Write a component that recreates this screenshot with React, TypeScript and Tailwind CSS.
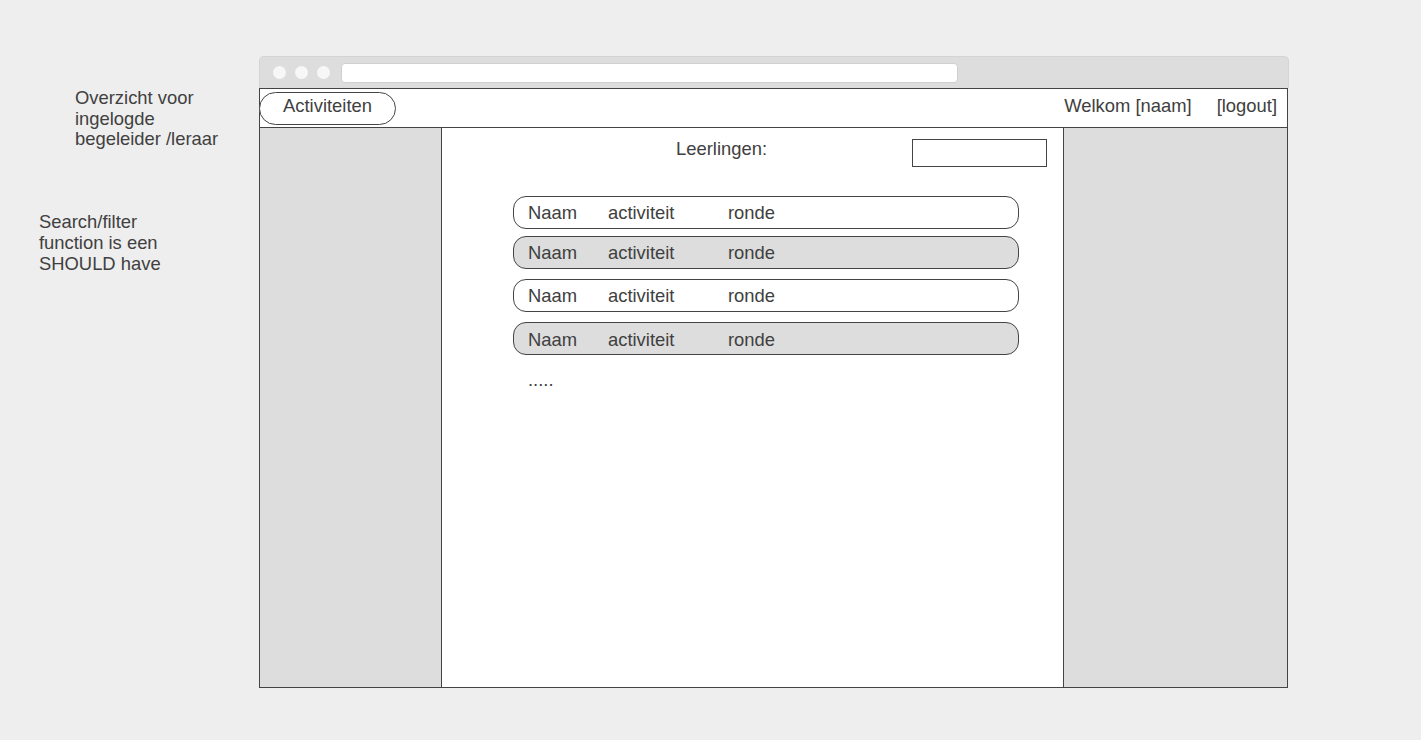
import React from "react";

const font = { fontFamily: '"Liberation Sans", Arial, sans-serif' };

function Row({ gray, shift }: { gray?: boolean; shift?: boolean }) {
  return (
    <div
      className={`flex h-[33px] w-[506px] items-center rounded-[13px] border border-[#444444] pl-[14px] text-[18.4px] text-[#404040] ${
        gray ? "bg-[#dddddd]" : "bg-white"
      } ${shift ? "pt-[3px]" : ""}`}
    >
      <span className="w-[80px]">Naam</span>
      <span className="w-[120px]">activiteit</span>
      <span>ronde</span>
    </div>
  );
}

export default function App() {
  return (
    <div
      className="flex h-[740px] w-[1421px] bg-[#eeeeee] text-[#404040]"
      style={font}
    >
      {/* annotations */}
      <div className="flex w-[259px] flex-col text-[18.4px] leading-[20.7px]">
        <div className="ml-[75px] mt-[88px]">
          Overzicht voor
          <br />
          ingelogde
          <br />
          begeleider /leraar
        </div>
        <div className="ml-[39px] mt-[62px]">
          Search/filter
          <br />
          function is een
          <br />
          SHOULD have
        </div>
      </div>

      {/* browser window */}
      <div className="mt-[56px] flex w-[1029px] flex-col">
        {/* chrome */}
        <div className="flex h-[32px] w-[1030px] items-center rounded-t-[5px] border border-b-0 border-[#d4d4d4] bg-[#dddddd] pl-[13px]">
          <div className="flex gap-[9px]">
            <div className="h-[13px] w-[13px] rounded-full bg-[#f7f7f7]" />
            <div className="h-[13px] w-[13px] rounded-full bg-[#f7f7f7]" />
            <div className="h-[13px] w-[13px] rounded-full bg-[#f7f7f7]" />
          </div>
          <div className="ml-[11px] h-[20px] w-[617px] rounded-[4px] border border-[#d0d0d0] bg-white" />
        </div>

        {/* frame */}
        <div className="flex flex-col border border-[#444444]">
          {/* nav */}
          <div className="flex h-[39px] items-start border-b border-[#444444] bg-white">
            <div className="-ml-px mt-[3px] flex h-[33px] w-[137px] items-center justify-center rounded-full border border-[#444444] bg-white pb-[6px] text-[18.4px]">
              Activiteiten
            </div>
            <div className="ml-auto mr-[10px] mt-[6px] flex text-[18.4px] leading-[21px]">
              <span>Welkom [naam]</span>
              <span className="ml-[25px]">[logout]</span>
            </div>
          </div>

          {/* main */}
          <div className="flex h-[559px]">
            <div className="w-[182px] border-r border-[#444444] bg-[#dddddd]" />
            <div className="flex w-[622px] flex-col border-r border-[#444444] bg-white">
              <div className="flex items-start">
                <div className="ml-[234px] mt-[10px] text-[18.4px] leading-[21px]">
                  Leerlingen:
                </div>
                <div className="ml-auto mr-[16px] mt-[11px] h-[28px] w-[135px] border border-[#444444] bg-white" />
              </div>
              <div className="ml-[71px] mt-[29px] flex flex-col">
                <Row />
                <div className="mt-[7px]">
                  <Row gray />
                </div>
                <div className="mt-[10px]">
                  <Row />
                </div>
                <div className="mt-[10px]">
                  <Row gray shift />
                </div>
                <div className="ml-[15px] mt-[14px] text-[18.4px] leading-[21px]">
                  .....
                </div>
              </div>
            </div>
            <div className="flex-1 bg-[#dddddd]" />
          </div>
        </div>
      </div>
    </div>
  );
}
